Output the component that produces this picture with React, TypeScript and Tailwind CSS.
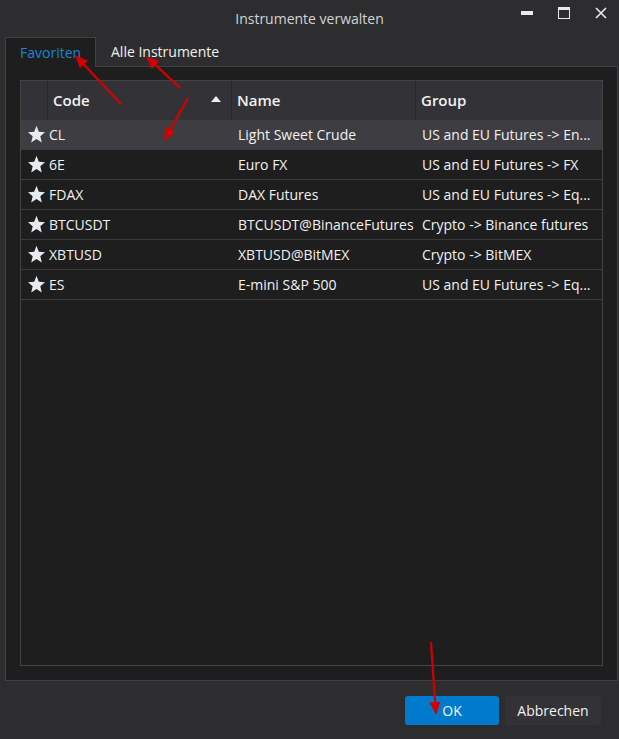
import React from "react";

type Row = { code: string; name: string; group: string };

const rows: Row[] = [
  { code: "CL", name: "Light Sweet Crude", group: "US and EU Futures -> En..." },
  { code: "6E", name: "Euro FX", group: "US and EU Futures -> FX" },
  { code: "FDAX", name: "DAX Futures", group: "US and EU Futures -> Eq..." },
  { code: "BTCUSDT", name: "BTCUSDT@BinanceFutures", group: "Crypto -> Binance futures" },
  { code: "XBTUSD", name: "XBTUSD@BitMEX", group: "Crypto -> BitMEX" },
  { code: "ES", name: "E-mini S&P 500", group: "US and EU Futures -> Eq..." },
];

const Star = () => (
  <svg width="19" height="19" viewBox="0 0 24 24" className="shrink-0">
    <polygon
      points="12,1 14.9,8.4 22.8,9 16.8,14.1 18.7,22 12,17.8 5.3,22 7.2,14.1 1.2,9 9.1,8.4"
      fill="#e6ebf0"
    />
  </svg>
);

// red annotation arrows drawn over the dialog
const Arrow = ({ x1, y1, x2, y2 }: { x1: number; y1: number; x2: number; y2: number }) => {
  const a = Math.atan2(y2 - y1, x2 - x1);
  const len = 13;
  const w = 5.5;
  const bx = x2 - len * Math.cos(a);
  const by = y2 - len * Math.sin(a);
  const p1 = `${bx + w * Math.sin(a)},${by - w * Math.cos(a)}`;
  const p2 = `${bx - w * Math.sin(a)},${by + w * Math.cos(a)}`;
  return (
    <g>
      <line x1={x1} y1={y1} x2={bx} y2={by} stroke="#d40000" strokeWidth="2.2" />
      <polygon points={`${x2},${y2} ${p1} ${p2}`} fill="#d40000" />
    </g>
  );
};

export default function App() {
  return (
    <div
      className="relative flex h-[739px] w-[619px] flex-col overflow-hidden bg-[#2d2d30] text-[14px] text-[#f1f1f1]"
      style={{ fontFamily: '"Open Sans", "Liberation Sans", sans-serif' }}
    >
      {/* title bar */}
      <div className="relative flex h-[37px] shrink-0 items-center justify-center">
        <span className="text-[14px] text-[#d4d4d4]">Instrumente verwalten</span>
        <div className="absolute right-0 top-0 flex h-[26px] items-center">
          <div className="flex w-[37px] justify-center">
            <div className="h-[4px] w-[12px] bg-[#eaeaea]" />
          </div>
          <div className="flex w-[37px] justify-center">
            <div className="h-[12px] w-[12px] border-x border-b border-t-[3px] border-[#eaeaea]" />
          </div>
          <div className="flex w-[37px] justify-center">
            <svg width="12" height="12" viewBox="0 0 12 12">
              <path d="M1 1 L11 11 M11 1 L1 11" stroke="#eaeaea" strokeWidth="1.6" />
            </svg>
          </div>
        </div>
      </div>

      {/* tabs */}
      <div className="flex h-[29px] shrink-0 items-stretch pl-[5px]">
        <div className="relative z-10 -mb-px flex w-[91px] items-center border border-b-0 border-[#3f3f46] bg-[#1e1e1e] pl-[14px] text-[#1c84d4]">
          Favoriten
        </div>
        <div className="flex items-center pl-[15px]">Alle Instrumente</div>
      </div>

      {/* tab panel */}
      <div className="ml-[5px] h-[615px] w-[613px] shrink-0 border border-[#3f3f46] bg-[#1e1e1e] pl-[14px] pt-[13px]">
        <div className="h-[586px] w-[583px] border border-[#434346] bg-[#1e1e1e]">
          {/* header */}
          <div className="flex h-[39px] bg-[#333337] text-[15px] font-semibold">
            <div className="w-[27px] border-r border-[#26262a]" />
            <div className="relative flex w-[184px] items-center border-r border-[#26262a] pl-[5px]">
              Code
              <svg width="10" height="6" viewBox="0 0 10 6" className="absolute right-[10px] top-[15px]">
                <polygon points="5,0 10,6 0,6" fill="#f1f1f1" />
              </svg>
            </div>
            <div className="flex w-[184px] items-center border-r border-[#26262a] pl-[5px]">Name</div>
            <div className="flex flex-1 items-center pl-[5px]">Group</div>
          </div>
          {rows.map((r, i) => (
            <div
              key={r.code}
              className={`flex h-[30px] items-center border-b border-[#3a3a3d] ${
                i === 0 ? "bg-[#3e3e42]" : "bg-[#1e1e1e]"
              }`}
            >
              <div className="flex w-[28px] justify-center pl-[3px] pb-[1px]">
                <Star />
              </div>
              <div className="w-[184px] truncate">{r.code}</div>
              <div className="w-[184px] truncate whitespace-nowrap pl-[5px]">{r.name}</div>
              <div className="flex-1 truncate whitespace-nowrap pl-[5px]">{r.group}</div>
            </div>
          ))}
        </div>
      </div>

      {/* buttons */}
      <div className="flex justify-end gap-[6px] pr-[18px] pt-[15px]">
        <button className="h-[29px] w-[94px] rounded-[3px] bg-[#007acc] text-[#f4f8fb]">OK</button>
        <button className="h-[29px] w-[96px] rounded-[3px] bg-[#333337] text-[#f1f1f1]">Abbrechen</button>
      </div>

      <svg className="pointer-events-none absolute left-0 top-0 z-20" width="619" height="739">
        <Arrow x1={121} y1={104} x2={75} y2={55} />
        <Arrow x1={180} y1={88} x2={146} y2={56} />
        <Arrow x1={188} y1={98} x2={164} y2={141} />
        <Arrow x1={431} y1={642} x2={436} y2={715} />
      </svg>
    </div>
  );
}
